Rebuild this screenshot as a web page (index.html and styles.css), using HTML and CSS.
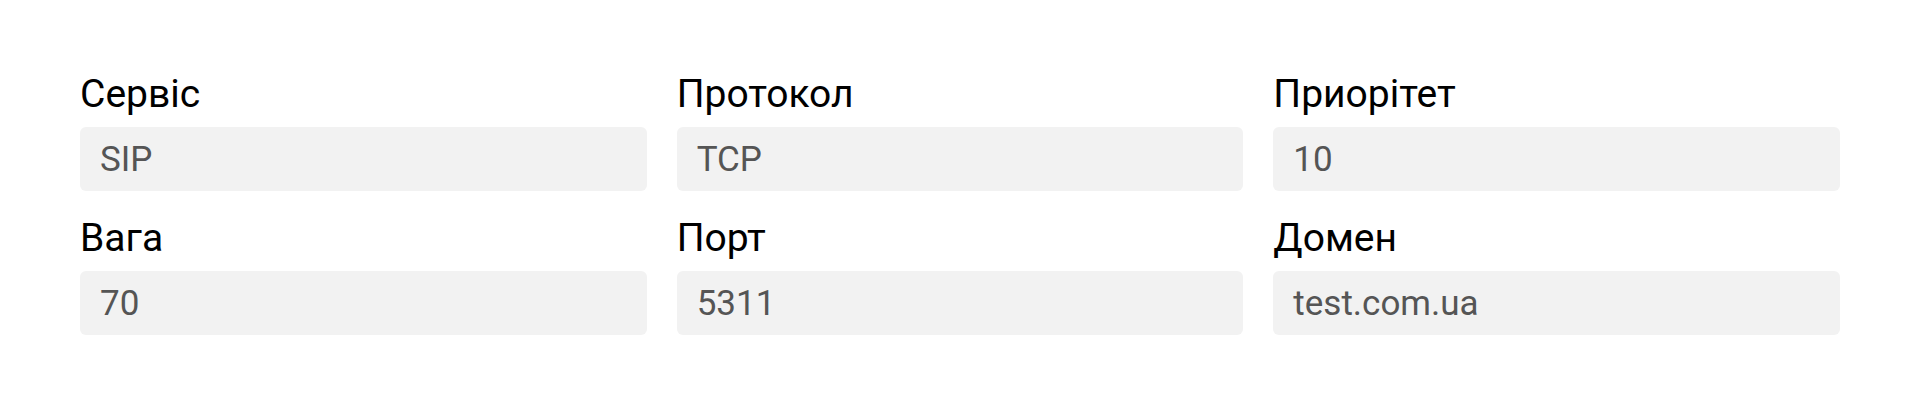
FILE: index.html
```html
<!DOCTYPE html>
<html lang="uk">
  <head>
    <meta charset="UTF-8" />
    <meta name="viewport" content="width=device-width, initial-scale=1.0" />
    <title>SRV запис</title>
    <link rel="stylesheet" href="styles.css">
  </head>
  <body>
    <div class="record">
      <div class="field">
        <label class="field-label">Сервіс</label>
        <div class="field-value">SIP</div>
      </div>
      <div class="field">
        <label class="field-label">Протокол</label>
        <div class="field-value">TCP</div>
      </div>
      <div class="field">
        <label class="field-label">Приорітет</label>
        <div class="field-value">10</div>
      </div>
      <div class="field">
        <label class="field-label">Вага</label>
        <div class="field-value">70</div>
      </div>
      <div class="field">
        <label class="field-label">Порт</label>
        <div class="field-value">5311</div>
      </div>
      <div class="field">
        <label class="field-label">Домен</label>
        <div class="field-value">test.com.ua</div>
      </div>
    </div>
  </body>
</html>
```

FILE: styles.css
```css
* {
  margin: 0;
  padding: 0;
  box-sizing: border-box;
}
body {
  background: #fff;
  font-family: Roboto, "Noto Sans", sans-serif;
}
.record {
  display: grid;
  grid-template-columns: repeat(3, 1fr);
  column-gap: 30px;
  row-gap: 24px;
  padding: 71px 80px;
}
.field {
  display: flex;
  flex-direction: column;
  gap: 10px;
}
.field-label {
  font-size: 39px;
  line-height: 46px;
  color: #000;
}
.field-value {
  height: 64px;
  padding: 1px 20px 0;
  background: #f2f2f2;
  border-radius: 6px;
  font-size: 35px;
  line-height: 64px;
  color: #555;
}
```
